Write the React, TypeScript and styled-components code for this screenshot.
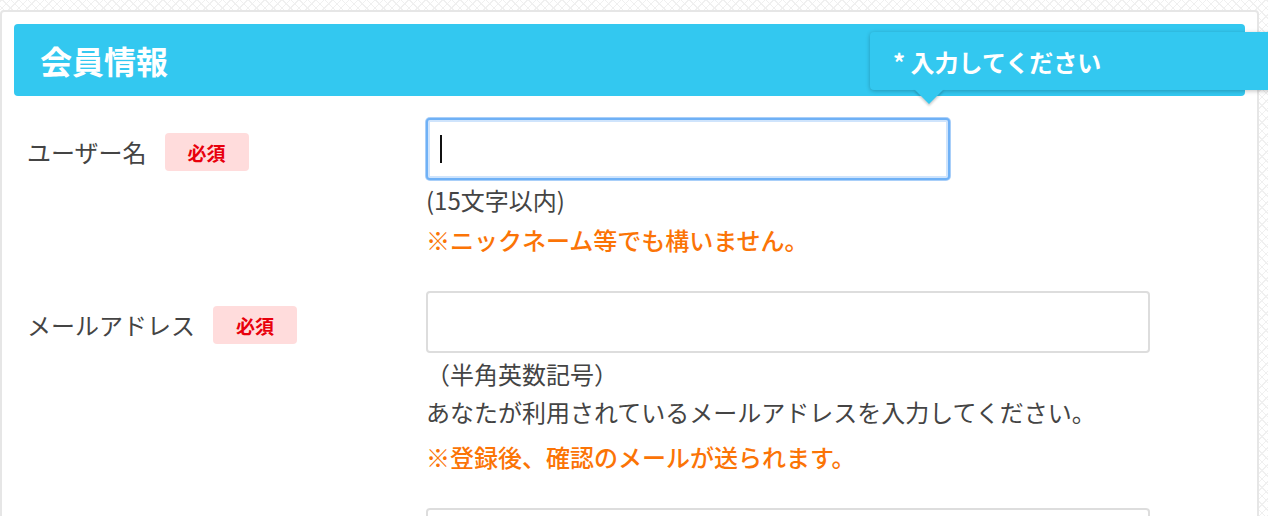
import * as React from 'react';
import styled, { createGlobalStyle } from 'styled-components';

const GlobalStyle = createGlobalStyle`
  html, body {
    margin: 0;
    padding: 0;
    overflow: hidden;
  }
  body {
    font-family: "Noto Sans CJK JP", "Noto Sans", sans-serif;
    color: #444;
    background-color: #fff;
    background-image:
      repeating-linear-gradient(45deg, #f0f0f0 0 1px, transparent 1px 6px),
      repeating-linear-gradient(-45deg, #f0f0f0 0 1px, transparent 1px 6px);
  }
`;

const App = () => {
  return (
    <>
      <GlobalStyle />
      <Page>
        <Panel>
          <SectionHeader>会員情報</SectionHeader>
          <Tooltip>* 入力してください</Tooltip>
          <Form>
            <Row>
              <LabelCell>
                <Label>ユーザー名</Label>
                <Required>必須</Required>
              </LabelCell>
              <FieldCell>
                <Field width={524} focused>
                  <Caret />
                </Field>
                <Hint top={1}>(15文字以内)</Hint>
                <Warn top={2}>※ニックネーム等でも構いません。</Warn>
              </FieldCell>
            </Row>
            <Row>
              <LabelCell>
                <Label>メールアドレス</Label>
                <Required>必須</Required>
              </LabelCell>
              <FieldCell>
                <Field width={724} />
                <Hint top={2}>（半角英数記号）</Hint>
                <Hint top={0}>あなたが利用されているメールアドレスを入力してください。</Hint>
                <Warn top={7}>※登録後、確認のメールが送られます。</Warn>
              </FieldCell>
            </Row>
            <Row>
              <LabelCell />
              <FieldCell>
                <Field width={724} />
              </FieldCell>
            </Row>
          </Form>
        </Panel>
      </Page>
    </>
  );
};

export default App;

const Page = styled.div`
  padding-top: 10px;
  height: 506px;
`;

const Panel = styled.div`
  position: relative;
  width: 1255px;
  min-height: 520px;
  background: #fff;
  border: 2px solid #e6e6e6;
  border-radius: 4px;
`;

const SectionHeader = styled.div`
  display: flex;
  align-items: center;
  height: 72px;
  margin: 12px 12px 0 12px;
  padding: 0 26px;
  background: #33c8f0;
  border-radius: 4px;
  color: #fff;
  font-size: 32px;
  font-weight: 700;
`;

const Tooltip = styled.div`
  position: absolute;
  left: 868px;
  top: 20px;
  width: 420px;
  height: 58px;
  display: flex;
  align-items: center;
  padding-left: 23px;
  box-sizing: border-box;
  background: #33c8f0;
  border-radius: 4px;
  box-shadow: 0 1px 4px rgba(0, 0, 0, 0.25);
  color: #fff;
  font-size: 24px;
  font-weight: 700;
  &::after {
    content: '';
    position: absolute;
    left: 44px;
    bottom: -14px;
    border-left: 15px solid transparent;
    border-right: 15px solid transparent;
    border-top: 15px solid #33c8f0;
    filter: drop-shadow(0 2px 1px rgba(0, 0, 0, 0.2));
  }
`;

const Form = styled.div`
  padding: 22px 0 0 25px;
  display: flex;
  flex-direction: column;
  gap: 32px;
`;

const Row = styled.div`
  display: grid;
  grid-template-columns: 399px 1fr;
  align-items: start;
`;

const LabelCell = styled.div`
  display: flex;
  align-items: center;
  gap: 18px;
  margin-top: 15px;
  height: 38px;
`;

const Label = styled.span`
  font-size: 24px;
  line-height: 38px;
  color: #444;
`;

const Required = styled.span`
  display: inline-flex;
  align-items: center;
  justify-content: center;
  width: 84px;
  height: 38px;
  background: #ffdcdc;
  border-radius: 4px;
  color: #e8000c;
  font-size: 19px;
  font-weight: 700;
`;

const FieldCell = styled.div`
  display: flex;
  flex-direction: column;
  align-items: flex-start;
`;

const Field = styled.div<{ width: number; focused?: boolean }>`
  display: flex;
  align-items: center;
  box-sizing: border-box;
  width: ${(p) => p.width}px;
  height: 62px;
  padding-left: 12px;
  background: #fff;
  border-radius: 4px;
  border: 2px solid ${(p) => (p.focused ? '#6fb1f6' : '#dddddd')};
  box-shadow: ${(p) =>
    p.focused ? '0 0 0 1px #a9cff9, inset 0 0 0 2px #cfe4fc' : 'none'};
`;

const Caret = styled.span`
  width: 2px;
  height: 28px;
  background: #111;
`;

const Hint = styled.div<{ top: number }>`
  margin-top: ${(p) => p.top}px;
  font-size: 24px;
  line-height: 38px;
  color: #444;
`;

const Warn = styled.div<{ top: number }>`
  margin-top: ${(p) => p.top}px;
  font-size: 24px;
  line-height: 38px;
  color: #fb7406;
  font-weight: 500;
`;
